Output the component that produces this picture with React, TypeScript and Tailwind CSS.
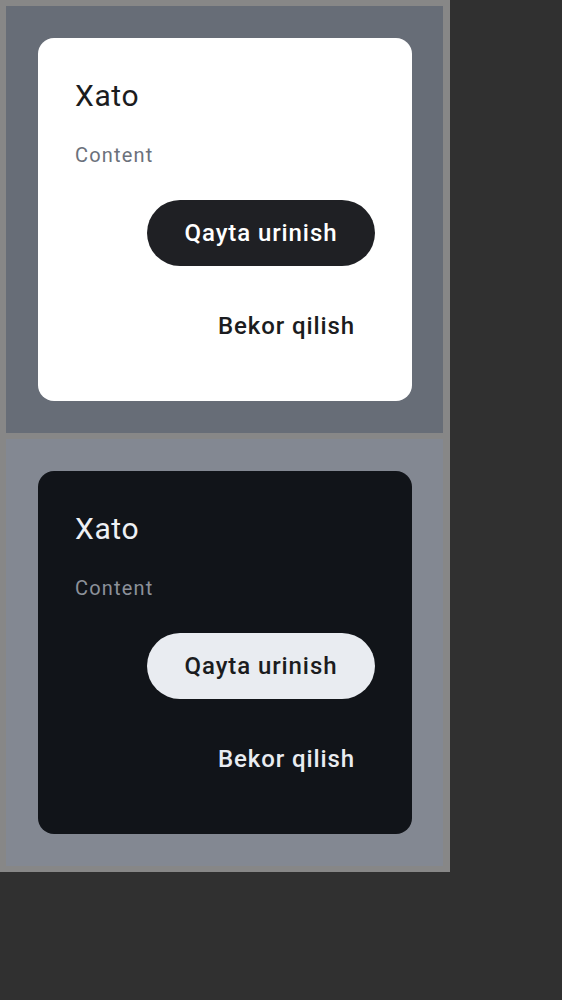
import React from "react";

function Dialog({ dark }: { dark: boolean }) {
  return (
    <div
      className={
        "flex flex-col py-[32px] pl-[32px] pr-[31px] " +
        (dark ? "bg-[#838892]" : "bg-[#676d77]")
      }
    >
      <div
        className={
          "flex h-[363px] flex-col rounded-[16px] pl-[37px] pr-[37px] pt-[38px] pb-[42px] " +
          (dark ? "bg-[#111419]" : "bg-white")
        }
      >
        <div
          className={
            "text-[30px] leading-[40px] font-normal tracking-[0.6px] " +
            (dark ? "text-[#eef0f4]" : "text-[#1b1c20]")
          }
        >
          Xato
        </div>
        <div
          className={
            "mt-[25px] text-[20px] leading-[28px] tracking-[1.2px] " +
            (dark ? "text-[#8c919a]" : "text-[#6b717b]")
          }
        >
          Content
        </div>
        <div className="mt-[31px] flex flex-col items-end gap-[27px]">
          <button
            className={
              "flex h-[66px] w-[228px] items-center justify-center rounded-full text-[24px] font-medium tracking-[0.9px] " +
              (dark ? "bg-[#e9ecf1] text-[#1b1c20]" : "bg-[#1f2024] text-white")
            }
          >
            Qayta urinish
          </button>
          <button
            className={
              "flex h-[66px] items-center justify-center rounded-full pl-[21px] pr-[20px] text-[24px] font-medium tracking-[0.9px] " +
              (dark ? "text-[#e9ecf1]" : "text-[#1b1c20]")
            }
          >
            Bekor qilish
          </button>
        </div>
      </div>
    </div>
  );
}

export default function App() {
  return (
    <div
      className="min-h-screen bg-[#303030]"
      style={{ fontFamily: "Roboto, 'Noto Sans', sans-serif" }}
    >
      <div className="flex w-[450px] flex-col gap-[6px] bg-[#878787] py-[6px] pl-[6px] pr-[7px]">
        <Dialog dark={false} />
        <Dialog dark={true} />
      </div>
    </div>
  );
}
